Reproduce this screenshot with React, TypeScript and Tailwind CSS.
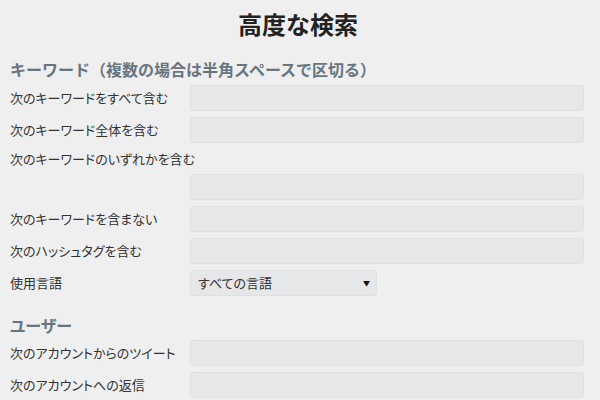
const font = "font-['Meiryo_UI','Noto_Sans_CJK_JP',sans-serif]";

function Field({ label }: { label: string }) {
  return (
    <div className="flex items-center h-[26px] mb-[6px]">
      <label className="w-[180px] shrink-0 text-[13px] text-[#333] whitespace-nowrap [font-feature-settings:'palt']">{label}</label>
      <input
        type="text"
        className="flex-1 h-[26px] rounded-[3px] border border-[#dfe0e1] bg-[#e6e7e8] outline-none"
      />
    </div>
  );
}

export default function App() {
  return (
    <div className={`w-[600px] h-[400px] overflow-hidden bg-[#efefef] pl-[10px] pr-[16px] ${font}`}>
      <h1 className="text-center text-[24px] font-bold text-[#222] leading-[28px] pt-[10px] pl-[2px]">高度な検索</h1>

      {/* Keywords */}
      <h2 className="mt-[21px] text-[16px] font-bold text-[#66757f] leading-[20px]">
        キーワード（複数の場合は半角スペースで区切る）
      </h2>
      <div className="mt-[6px]">
        <Field label="次のキーワードをすべて含む" />
        <Field label="次のキーワード全体を含む" />
        <div className="text-[13px] text-[#333] leading-[20px] mt-[1px] mb-[5px] [font-feature-settings:'palt']">次のキーワードのいずれかを含む</div>
        <div className="flex items-center h-[26px] mb-[6px]">
          <div className="w-[180px] shrink-0" />
          <input
            type="text"
            className="flex-1 h-[26px] rounded-[3px] border border-[#dfe0e1] bg-[#e6e7e8] outline-none"
          />
        </div>
        <Field label="次のキーワードを含まない" />
        <Field label="次のハッシュタグを含む" />
        <div className="flex items-center h-[26px]">
          <label className="w-[180px] shrink-0 text-[13px] text-[#333]">使用言語</label>
          <div className="w-[187px] h-[26px] rounded-[3px] border border-[#dfe0e1] bg-[#e6e7e8] flex items-center justify-between pl-[7px] pr-[6px]">
            <span className="text-[13px] text-[#333] [font-feature-settings:'palt']">すべての言語</span>
            <span className="text-[7px] text-[#111] leading-none">▼</span>
          </div>
        </div>
      </div>

      {/* Users */}
      <h2 className="mt-[19px] text-[16px] font-bold text-[#66757f] leading-[20px] [font-feature-settings:'palt']">ユーザー</h2>
      <div className="mt-[5px]">
        <Field label="次のアカウントからのツイート" />
        <Field label="次のアカウントへの返信" />
      </div>
    </div>
  );
}
